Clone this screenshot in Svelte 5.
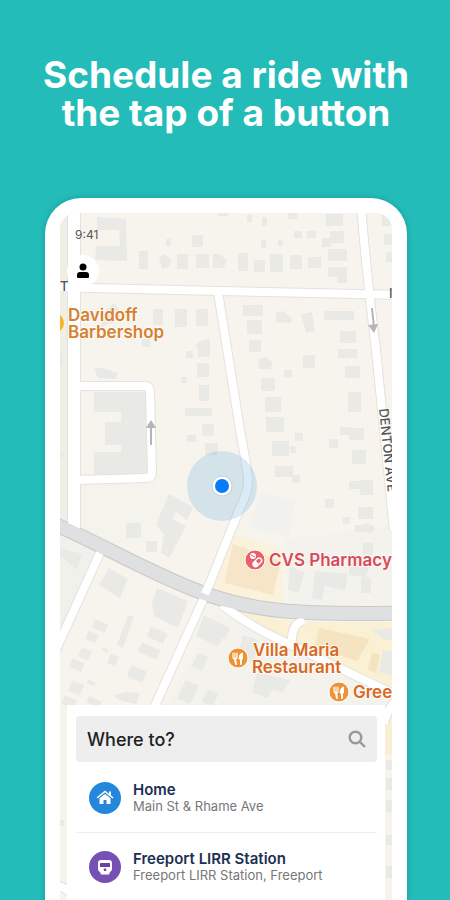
<script lang="ts">
  type Box = [number, number, number, number];
  type Place = { name: string; address: string; kind: "home" | "station" };

  const places: Place[] = [
    { name: "Home", address: "Main St & Rhame Ave", kind: "home" },
    { name: "Freeport LIRR Station", address: "Freeport LIRR Station, Freeport", kind: "station" },
  ];

  let destination = $state("");

  // Upright houses: left, top, right, bottom
  const houses: Box[] = [
    [139, 251, 148, 269], [177, 254, 188, 269], [196, 254, 209, 268],
    [192, 235, 203, 247], [166, 239, 171, 246], [218, 211, 228, 216],
    [238, 253, 248, 271], [254, 260, 265, 272], [270, 254, 283, 272],
    [290, 255, 302, 269], [308, 257, 321, 268], [326, 214, 343, 226],
    [330, 231, 344, 243], [322, 238, 331, 247], [328, 249, 347, 261],
    [328, 267, 347, 277], [337, 275, 347, 283], [247, 215, 252, 222],
    [262, 217, 267, 226], [288, 211, 297, 219], [294, 231, 302, 238],
    [307, 231, 316, 238], [261, 240, 266, 248], [278, 240, 283, 246],
    [382, 215, 391, 226], [384, 234, 392, 245], [386, 252, 392, 262],
    [243, 305, 263, 316], [247, 320, 262, 334], [249, 340, 261, 352],
    [324, 311, 354, 320], [340, 331, 356, 343], [338, 349, 357, 358],
    [153, 309, 163, 325], [175, 309, 187, 327], [196, 309, 208, 326],
    [186, 351, 193, 358], [142, 339, 150, 347], [198, 349, 209, 357],
    [197, 363, 209, 377], [199, 385, 209, 401], [185, 408, 212, 416],
    [202, 424, 214, 436], [205, 443, 218, 455], [181, 377, 187, 383],
    [187, 435, 196, 442], [126, 523, 141, 538], [146, 541, 157, 552],
    [303, 355, 315, 368], [284, 370, 292, 377], [345, 366, 360, 378],
    [261, 378, 275, 391], [265, 397, 281, 412], [266, 417, 284, 432],
    [272, 441, 289, 456], [290, 446, 296, 453], [295, 433, 303, 441],
    [275, 466, 293, 477], [292, 475, 300, 483], [348, 392, 361, 412],
    [340, 427, 352, 435], [349, 428, 364, 440], [352, 450, 366, 464],
    [329, 439, 338, 448], [349, 481, 362, 489], [360, 480, 373, 495],
    [358, 507, 373, 519], [325, 499, 334, 508], [343, 517, 350, 524],
    [355, 525, 374, 532], [363, 543, 373, 555], [361, 577, 371, 593],
    [60, 452, 63, 458], [60, 352, 63, 366],
    [60, 820, 64, 826], [386, 760, 392, 770], [386, 778, 392, 790],
    [386, 800, 392, 812], [386, 835, 392, 845], [386, 866, 392, 878],
  ];

  // Houses that line up with the slanted streets: centre x, centre y, width, height
  const slanted: Box[] = [
    [100, 626, 14, 9], [92, 637, 11, 9], [85, 654, 11, 10], [77, 665, 13, 9],
    [157, 635, 18, 11], [149, 651, 20, 10], [113, 660, 9, 10], [137, 674, 17, 12],
    [76, 688, 13, 11], [69, 702, 13, 9], [200, 662, 11, 15], [188, 692, 14, 20],
    [210, 698, 12, 14], [94, 702, 14, 7], [105, 650, 7, 3], [222, 631, 12, 12],
    [91, 683, 8, 4],
  ];

  const blocks = [
    "94,392 147,392 147,474 94,474 94,452 121,452 121,445 105,445 105,422 121,422 121,412 94,412",
    "97,217 126,219 127,261 95,260 96,246 120,246 119,230 97,230",
    "159,257 165,254 172,261 168,267 162,269",
    "213,254 220,254 227,261 221,268 213,268",
    "220,257 226,261 224,268 220,268",
    "276,313 283,311 292,318 291,323 276,322",
    "301,314 312,312 315,331 306,333",
    "195,345 202,340 210,339 210,357 202,355",
    "106,310 114,303 121,312 119,320 100,328",
    "94,368 103,368 118,373 116,379 98,378",
    "258,359 266,357 273,363 271,369 259,369",
    "169,494 193,507 187,520 176,512 172,519 186,526 169,558 161,553 164,535 156,524",
    "60,548 82,554 77,570 70,564 60,556",
    "109,568 128,579 120,598 99,585",
    "157,588 188,601 178,628 154,616 152,603",
    "128,615 134,617 123,648 117,645",
    "204,615 228,628 218,647 196,636",
    "113,696 125,692 140,693 136,704 122,701",
    "290,567 304,572 299,593 288,590",
    "315,571 348,574 345,590 325,586 322,600 312,598",
    "349,554 372,558 366,577 349,575",
    "355,526 368,523 375,528 370,534",
    "372,630 392,628 392,640 384,640",
    "383,650 392,652 392,676 379,672",
    "243,635 258,640 254,663 238,656",
    "257,673 290,680 283,692 272,690 268,698 252,692",
  ];

  const streets = [
    "M50 287L220 291 400 295",
    "M218 292L240 430Q246 462 248 478Q249 490 240 508L203 600 153 710",
    "M361 205Q367 280 376 350L394 530",
    "M76 386H145Q150 386 150 392L152 472Q152 478 146 478L76 480",
    "M100 553L54 654",
    "M222 605Q246 623 268 634L400 697",
    "M304 620Q291 624 292 643",
    "M400 696Q386 710 384 724",
    "M56 885Q62 886 70 892",
  ];

  const mainStreet = "M74 200V530";
  const avenue = "M50 522C105 546 140 568 195 590S300 615 400 613";
</script>

{#snippet restaurantPin()}
  <circle r="10" fill="#ee9334" stroke="#fff" stroke-width="1" />
  <g fill="none" stroke="#fff" stroke-linecap="round">
    <path d="M-5-5V-1Q-5 1-3 1T-1-1V-5M-3-5V1" stroke-width="1.2" />
    <path d="M-3 1L-2 6M3 1V6" stroke-width="2" />
    <path d="M4-5Q1-4 1 1H4Z" fill="#fff" stroke-width="1" />
  </g>
{/snippet}

<main class="promo">
  <h1>Schedule a ride with<br />the tap of a button</h1>

  <div class="phone">
    <div class="screen">
      <svg class="map" viewBox="60 213 332 720" role="img" aria-label="Map">
        <rect x="0" y="0" width="500" height="1200" fill="#f7f4ed" />
        <path d="M60 213H68V520H60Z" fill="#f0efe6" />
        <path d="M80 480H150L165 500 130 550 80 530Z" fill="#f4f3ec" />
        <path d="M60 535L96 552 60 632Z" fill="#f1f1ec" />
        <path d="M262 492L296 502 288 538 248 526Z" fill="#f1f1ee" />
        <path d="M284 540L392 525V607H290Z" fill="#f3f2ec" />
        <path d="M215 612L392 690V710H165Z" fill="#f3f2ed" />
        <path d="M231 532L284 550 282 608 212 592Z" fill="#fbf2dc" />
        <path d="M233 544L281 561 273 595 224 583Z" fill="#f6e6c7" />
        <path d="M228 610L300 622H392V688L290 642Z" fill="#faf0d4" />
        <path d="M319 628L370 639 357 661 315 647Z" fill="#f5e4bf" />
        <path d="M372 652L380 655 376 673 368 670Z" fill="#f5e4bf" />
        <path d="M376 705H392V755H384Z" fill="#faeed4" />

        <g class="building">
          {#each houses as [left, top, right, bottom]}
            <rect x={left} y={top} width={right - left} height={bottom - top} />
          {/each}
          {#each slanted as [x, y, w, h]}
            <rect x={x - w / 2} y={y - h / 2} width={w} height={h} transform="rotate(24 {x} {y})" />
          {/each}
          {#each blocks as points}
            <polygon {points} />
          {/each}
        </g>

        <path class="main-edge" d={mainStreet} />
        {#each streets as d}
          <path {d} class="street-edge" />
        {/each}
        <path class="avenue-edge" d={avenue} />
        <path class="main-street" d={mainStreet} />
        {#each streets as d}
          <path {d} class="street" />
        {/each}
        <path class="avenue" d={avenue} />
        <path class="street" d="M205 594L211 580" />

        <g fill="none" stroke="#b5b5b5" stroke-width="2">
          <path d="M151 445V425" />
          <path d="M372 308L374 328" />
        </g>
        <path d="M151 420L156 428H146ZM374 333L368 325 378 324Z" fill="#b5b5b5" />

        <circle cx="222" cy="486" r="35" fill="#86b9e2" fill-opacity="0.3" />
        <circle cx="222" cy="486" r="10" fill="#fff" stroke="#c4d0d8" stroke-width="1" />
        <circle cx="222" cy="486" r="7" fill="#087bfb" />

        <g class="road-name">
          <text x="60" y="291">T</text>
          <text x="389" y="298">I</text>
          <text transform="translate(379 409) rotate(84)">DENTON AVE</text>
        </g>

        <circle cx="54" cy="323" r="10" fill="#f9b524" />
        <g class="poi barber">
          <text x="68" y="321">Davidoff</text>
          <text x="68" y="338">Barbershop</text>
        </g>

        <g transform="translate(255 560)">
          <circle r="10" fill="#e8606a" stroke="#fff" stroke-width="1" />
          <circle cx="-2" cy="-4" r="3" fill="#fff" />
          <path d="M-4-5L0-3" stroke="#e8606a" stroke-width="1" />
          <rect x="-5" y="-2" width="10" height="5" rx="2.5" fill="#e8606a" stroke="#fff" stroke-width="1.4" transform="translate(2 2) rotate(-45)" />
          <rect x="-5" y="-2" width="5" height="5" rx="2" fill="#fff" transform="translate(2 2) rotate(-45)" />
        </g>
        <text class="poi pharmacy" x="269" y="566">CVS Pharmacy</text>

        <g transform="translate(238 658)">{@render restaurantPin()}</g>
        <g class="poi food">
          <text x="253" y="656">Villa Maria</text>
          <text x="252" y="673">Restaurant</text>
        </g>
        <g transform="translate(339 692)">{@render restaurantPin()}</g>
        <text class="poi food" x="353" y="698">Gree</text>
      </svg>

      <div class="overlay">
        <header class="top">
          <time>9:41</time>
          <button class="profile" aria-label="Profile">
            <svg viewBox="0 0 14 16" width="14" height="16" aria-hidden="true">
              <circle cx="7" cy="4" r="3.5" />
              <path d="M1 14V12Q1 9 4 9H10Q13 9 13 12V14Q13 15 12 15H2Q1 15 1 14Z" />
            </svg>
          </button>
        </header>

        <section class="sheet">
          <div class="search">
            <input type="text" placeholder="Where to?" aria-label="Where to?" bind:value={destination} />
            <svg viewBox="0 0 18 18" width="18" height="18" aria-hidden="true">
              <circle cx="7.5" cy="7.5" r="5.8" />
              <path d="M12 12L17 17" />
            </svg>
          </div>

          <ul>
            {#each places as place}
              <li>
                <button class="place" onclick={() => (destination = place.name)}>
                  <span class="badge {place.kind}">
                    {#if place.kind === "home"}
                      <svg viewBox="0 0 18 16" width="18" height="16" aria-hidden="true">
                        <path d="M1 8L9 1.5 17 8" fill="none" stroke="#fff" stroke-width="1.6" />
                        <path d="M13 1.5H15V6L13 4.5ZM3.5 8.2L9 4 14.5 8.2V14H10.5V10H7.5V14H3.5Z" fill="#fff" />
                      </svg>
                    {:else}
                      <svg viewBox="0 0 16 16" width="16" height="16" aria-hidden="true">
                        <path d="M4 1H12Q15 1 15 4V10Q15 12 13 13L12 15.500H4L3 13Q1 12 1 10V4Q1 1 4 1Z" fill="#fff" />
                        <rect x="3" y="4" width="10" height="4" rx="0.5" fill="#6a3fa6" />
                        <circle cx="8" cy="10.8" r="1.4" fill="#6a3fa6" />
                      </svg>
                    {/if}
                  </span>
                  <span class="text">
                    <strong>{place.name}</strong>
                    <small>{place.address}</small>
                  </span>
                </button>
              </li>
            {/each}
          </ul>
        </section>
      </div>
    </div>
  </div>
</main>

<style>
  :global(body) {
    background: #24bcb9;
  }

  .promo {
    box-sizing: border-box;
    height: 100vh;
    overflow: hidden;
    padding: 56px 43px 0 45px;
    background: #24bcb9;
    font-family: Inter, "Liberation Sans", sans-serif;
  }

  h1 {
    margin: 0 -20px 66px;
    color: #fff;
    font-size: 37px;
    font-weight: 700;
    line-height: 38px;
    text-align: center;
  }

  .phone {
    padding: 15px;
    background: #fff;
    border-radius: 36px;
    box-shadow: 0 0 6px rgba(0, 90, 90, 0.3);
  }

  .screen {
    position: relative;
    overflow: hidden;
    border-radius: 16px;
    background: #f7f4ed;
  }

  .map {
    position: absolute;
    top: 0;
    left: 0;
    width: 100%;
    height: auto;
  }

  .building {
    fill: #e9e9e6;
  }

  .main-edge,
  .main-street,
  .street-edge,
  .street,
  .avenue-edge,
  .avenue {
    fill: none;
  }

  .main-edge {
    stroke: #e3e2df;
    stroke-width: 14px;
  }

  .main-street {
    stroke: #fff;
    stroke-width: 12px;
  }

  .street-edge {
    stroke: #e3e2df;
    stroke-width: 10px;
  }

  .street {
    stroke: #fff;
    stroke-width: 8px;
  }

  .avenue-edge {
    stroke: #c9c9c7;
    stroke-width: 15px;
  }

  .avenue {
    stroke: #dfe0e1;
    stroke-width: 13px;
  }

  .road-name {
    fill: #555;
    font-size: 13px;
    font-weight: 500;
  }

  .poi {
    font-size: 17px;
    font-weight: 600;
    stroke: #fff;
    stroke-width: 2px;
    stroke-opacity: 0.7;
    paint-order: stroke;
  }

  .barber {
    fill: #d5812f;
  }

  .pharmacy {
    fill: #d94a57;
  }

  .food {
    fill: #d86a23;
  }

  .overlay {
    position: relative;
    padding: 0 7px;
  }

  .top {
    box-sizing: border-box;
    height: 492px;
    padding-top: 14px;
  }

  time {
    display: block;
    margin-left: 8px;
    color: #555;
    font-size: 12px;
    line-height: 16px;
  }

  .profile {
    display: grid;
    place-items: center;
    width: 32px;
    height: 32px;
    margin-top: 12px;
    padding: 0;
    border: 0;
    border-radius: 50%;
    background: #fff;
  }

  .sheet {
    padding: 11px 8px 24px 9px;
    background: #fff;
  }

  .search {
    display: flex;
    align-items: center;
    height: 46px;
    padding: 0 11px;
    border-radius: 4px;
    background: #eee;
  }

  .search input {
    flex: 1;
    min-width: 0;
    padding: 0;
    border: 0;
    outline: 0;
    background: none;
    color: #222;
    font: 500 18px Inter, "Liberation Sans", sans-serif;
  }

  .search input::placeholder {
    color: #222;
    opacity: 1;
  }

  .search svg {
    fill: none;
    stroke: #999;
    stroke-width: 2.4px;
  }

  ul {
    margin: 2px 0 0;
    padding: 0;
    list-style: none;
  }

  li + li {
    border-top: 1px solid #eee;
  }

  .place {
    display: flex;
    align-items: center;
    gap: 12px;
    width: 100%;
    height: 68px;
    padding: 0 13px;
    border: 0;
    background: none;
    font-family: inherit;
    text-align: left;
    cursor: pointer;
  }

  .badge {
    display: grid;
    place-items: center;
    width: 32px;
    height: 32px;
    border-radius: 50%;
  }

  .home {
    background: #2487dc;
  }

  .station {
    background: #7650b4;
  }

  .text {
    display: flex;
    flex-direction: column;
  }

  strong {
    color: #1c2f52;
    font-size: 15px;
    font-weight: 600;
    line-height: 16px;
  }

  small {
    color: #777;
    font-size: 13px;
    line-height: 16px;
  }
</style>
